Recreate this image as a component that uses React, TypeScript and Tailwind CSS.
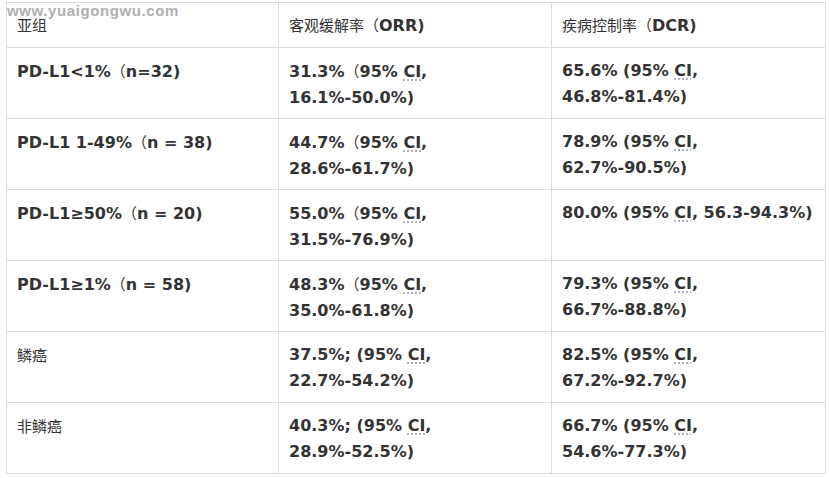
import React from "react";

type Row = {
  group: React.ReactNode;
  orr: React.ReactNode;
  dcr: React.ReactNode;
};

const zh = (s: string) => (
  <span className="text-[15px] font-normal [font-family:'Noto_Sans_CJK_SC',sans-serif]">{s}</span>
);

const CI = () => (
  <span className="underline decoration-dotted decoration-gray-400 underline-offset-[3px]">CI</span>
);

const rows: Row[] = [
  {
    group: <>PD-L1&lt;1%{zh("（")}n=32)</>,
    orr: <>31.3%{zh("（")}95% <CI />,<br />16.1%-50.0%)</>,
    dcr: <>65.6% (95% <CI />,<br />46.8%-81.4%)</>,
  },
  {
    group: <>PD-L1 1-49%{zh("（")}n = 38)</>,
    orr: <>44.7%{zh("（")}95% <CI />,<br />28.6%-61.7%)</>,
    dcr: <>78.9% (95% <CI />,<br />62.7%-90.5%)</>,
  },
  {
    group: <>PD-L1≥50%{zh("（")}n = 20)</>,
    orr: <>55.0%{zh("（")}95% <CI />,<br />31.5%-76.9%)</>,
    dcr: <span className="whitespace-nowrap">80.0% (95% <CI />, 56.3-94.3%)</span>,
  },
  {
    group: <>PD-L1≥1%{zh("（")}n = 58)</>,
    orr: <>48.3%{zh("（")}95% <CI />,<br />35.0%-61.8%)</>,
    dcr: <>79.3% (95% <CI />,<br />66.7%-88.8%)</>,
  },
  {
    group: zh("鳞癌"),
    orr: <>37.5%; (95% <CI />,<br />22.7%-54.2%)</>,
    dcr: <>82.5% (95% <CI />,<br />67.2%-92.7%)</>,
  },
  {
    group: zh("非鳞癌"),
    orr: <>40.3%; (95% <CI />,<br />28.9%-52.5%)</>,
    dcr: <>66.7% (95% <CI />,<br />54.6%-77.3%)</>,
  },
];

export default function App() {
  return (
    <div className="relative h-[478px] w-[829px] bg-white pl-[6px] pt-[2px] text-[#333] [font-family:Verdana,'DejaVu_Sans',sans-serif]">
      {/* watermark */}
      <div className="absolute left-[7px] top-0 z-10 text-[15px] font-bold tracking-[0.6px] text-[#b0b0b0] [font-family:'Liberation_Sans',Arial,sans-serif] [text-shadow:0_0_1px_#fff]">
        www.yuaigongwu.com
      </div>

      <table className="w-[820px] table-fixed border-collapse text-[16px] font-bold leading-[26px]">
        <colgroup>
          <col className="w-[272px]" />
          <col className="w-[273px]" />
          <col />
        </colgroup>
        <thead>
          <tr className="h-[45px]">
            <th className="border border-[#dcdcdc] px-[10px] pt-[9px] text-left align-top">{zh("亚组")}</th>
            <th className="border border-[#dcdcdc] px-[10px] pt-[9px] text-left align-top">
              {zh("客观缓解率（")}ORR)
            </th>
            <th className="border border-[#dcdcdc] px-[10px] pt-[9px] text-left align-top">
              {zh("疾病控制率（")}DCR)
            </th>
          </tr>
        </thead>
        <tbody>
          {rows.map((r, i) => (
            <tr key={i} className="h-[71px]">
              <td className="border border-[#dcdcdc] px-[10px] pt-[10px] align-top">{r.group}</td>
              <td className="border border-[#dcdcdc] px-[10px] pt-[10px] align-top">{r.orr}</td>
              <td className="border border-[#dcdcdc] px-[10px] pt-[10px] align-top">{r.dcr}</td>
            </tr>
          ))}
        </tbody>
      </table>
    </div>
  );
}
